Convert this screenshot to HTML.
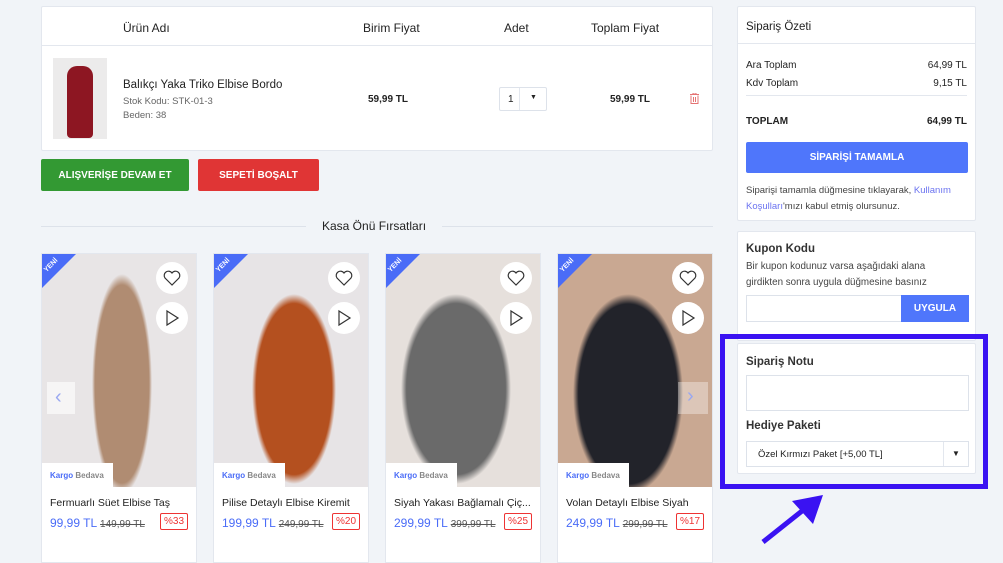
<!DOCTYPE html>
<html><head><meta charset="utf-8"><style>
*{box-sizing:border-box;margin:0;padding:0}
body{width:1003px;height:557px;overflow:hidden;background:#f1f4f8;font-family:"Liberation Sans",sans-serif;color:#222;position:relative}
.abs{position:absolute}
.box{position:absolute;background:#fff;border:1px solid #e3e7ee;border-radius:2px}
.th{position:absolute;top:14px;font-size:12px;color:#222}
.btn{position:absolute;color:#fff;font-size:10px;font-weight:bold;display:flex;align-items:center;justify-content:center;border-radius:2px}
.card{position:absolute;top:253px;width:156px;height:310px;background:#fff;border:1px solid #e3e7ee;overflow:hidden}
.img{position:absolute;left:0;top:0;width:156px;height:233px}
.yeni{position:absolute;left:0;top:0;width:0;height:0;border-top:34px solid #4a6cf7;border-right:34px solid transparent}
.yt{position:absolute;left:1px;top:8px;font-size:7px;color:#fff;font-weight:bold;transform:rotate(-45deg)}
.circ{position:absolute;width:32px;height:32px;border-radius:50%;background:#fff;display:flex;align-items:center;justify-content:center}
.kargo{position:absolute;left:0;top:209px;width:71px;height:24px;background:#fff;font-size:8px;font-weight:bold;color:#888;padding:8px 0 0 8px}
.kargo b{color:#4a6cf7}
.ct{position:absolute;left:8px;top:243px;font-size:10.5px;color:#222;white-space:nowrap}
.pr{position:absolute;left:8px;top:262px;font-size:12px;color:#4a6cf7;white-space:nowrap}
.pr s{color:#555;font-size:10px}
.dc{position:absolute;right:8px;top:259px;border:1px solid #e33;color:#e33;font-size:10px;padding:2px 3px;border-radius:2px}
.r{position:absolute;font-size:10px}
</style></head><body>

<div class="box" style="left:41px;top:6px;width:672px;height:145px">
 <div class="th" style="left:81px">Ürün Adı</div>
 <div class="th" style="left:321px">Birim Fiyat</div>
 <div class="th" style="left:462px">Adet</div>
 <div class="th" style="left:549px">Toplam Fiyat</div>
 <div class="abs" style="left:0;top:38px;width:670px;height:1px;background:#e3e7ee"></div>
 <div class="abs" style="left:11px;top:51px;width:54px;height:81px;background:#ecebeb;overflow:hidden"><div class="abs" style="left:14px;top:8px;width:26px;height:72px;background:#8d1622;border-radius:10px 10px 4px 4px"></div></div>
 <div class="abs" style="left:81px;top:72px;font-size:11.5px">Balıkçı Yaka Triko Elbise Bordo</div>
 <div class="abs" style="left:81px;top:89px;font-size:9.5px;color:#666">Stok Kodu: STK-01-3</div>
 <div class="abs" style="left:81px;top:103px;font-size:9.5px;color:#666">Beden: 38</div>
 <div class="abs" style="left:326px;top:87px;font-size:10px;font-weight:bold">59,99 TL</div>
 <div class="abs" style="left:457px;top:80px;width:48px;height:24px;border:1px solid #dde2ea;border-radius:2px;font-size:10px;padding:6px 0 0 8px">1<span class="abs" style="left:19px;top:0;width:1px;height:22px;background:#e3e7ee"></span><span class="abs" style="left:30px;top:6px;font-size:7px">▼</span></div>
 <div class="abs" style="left:568px;top:87px;font-size:10px;font-weight:bold">59,99 TL</div>
 <svg class="abs" style="left:648px;top:86px" width="9" height="11" viewBox="0 0 9 11"><path d="M0 1.5H9M3 1.5V0H6V1.5M1 2.5V10.5H8V2.5M3.5 4V9M5.5 4V9" stroke="#e57373" fill="none" stroke-width="1"/></svg>
</div>

<div class="btn" style="left:41px;top:159px;width:148px;height:32px;background:#339933">ALIŞVERİŞE DEVAM ET</div>
<div class="btn" style="left:198px;top:159px;width:121px;height:32px;background:#e03535">SEPETİ BOŞALT</div>

<div class="abs" style="left:41px;top:226px;width:265px;height:1px;background:#dde2ea"></div>
<div class="abs" style="left:322px;top:219px;font-size:12px;color:#222">Kasa Önü Fırsatları</div>
<div class="abs" style="left:442px;top:226px;width:271px;height:1px;background:#dde2ea"></div>

<div class="card" style="left:41px">
 <div class="img" style="background:radial-gradient(ellipse 30px 110px at 80px 130px,#b08c72 90%,transparent 100%),#e8e5e6"></div>
 <div class="yeni"></div><div class="yt">YENİ</div>
 <div class="abs" style="left:5px;top:128px;width:28px;height:32px;background:rgba(255,255,255,.6)"><span class="abs" style="left:8px;top:4px;font-size:20px;color:#9aa8f0">‹</span></div>
 <div class="kargo"><b>Kargo</b> Bedava</div>
 <div class="ct">Fermuarlı Süet Elbise Taş</div>
 <div class="pr">99,99 TL <s>149,99 TL</s></div><div class="dc">%33</div>
</div>
<div class="card" style="left:213px">
 <div class="img" style="background:radial-gradient(ellipse 42px 95px at 80px 135px,#b4501f 90%,transparent 100%),#e7e4e6"></div>
 <div class="yeni"></div><div class="yt">YENİ</div>
 <div class="kargo"><b>Kargo</b> Bedava</div>
 <div class="ct">Pilise Detaylı Elbise Kiremit</div>
 <div class="pr">199,99 TL <s>249,99 TL</s></div><div class="dc">%20</div>
</div>
<div class="card" style="left:385px">
 <div class="img" style="background:radial-gradient(ellipse 55px 95px at 70px 135px,#6a6a6a 90%,transparent 100%),#e6e0dc"></div>
 <div class="yeni"></div><div class="yt">YENİ</div>
 <div class="kargo"><b>Kargo</b> Bedava</div>
 <div class="ct">Siyah Yakası Bağlamalı Çiç...</div>
 <div class="pr">299,99 TL <s>399,99 TL</s></div><div class="dc">%25</div>
</div>
<div class="card" style="left:557px">
 <div class="img" style="background:radial-gradient(ellipse 55px 100px at 70px 140px,#22232a 90%,transparent 100%),#c9a892"></div>
 <div class="yeni"></div><div class="yt">YENİ</div>
 <div class="abs" style="left:120px;top:128px;width:30px;height:32px;background:rgba(255,255,255,.35)"><span class="abs" style="left:9px;top:3px;font-size:20px;color:#9aa8f0">›</span></div>
 <div class="kargo"><b>Kargo</b> Bedava</div>
 <div class="ct">Volan Detaylı Elbise Siyah</div>
 <div class="pr">249,99 TL <s>299,99 TL</s></div><div class="dc">%17</div>
</div>

<div class="box" style="left:737px;top:6px;width:239px;height:215px">
 <div class="abs" style="left:8px;top:14px;font-size:11.5px">Sipariş Özeti</div>
 <div class="abs" style="left:0;top:36px;width:237px;height:1px;background:#e3e7ee"></div>
 <div class="r" style="left:8px;top:53px">Ara Toplam</div><div class="r" style="right:8px;top:53px">64,99 TL</div>
 <div class="r" style="left:8px;top:71px">Kdv Toplam</div><div class="r" style="right:8px;top:71px">9,15 TL</div>
 <div class="abs" style="left:8px;top:88px;width:221px;height:1px;background:#e3e7ee"></div>
 <div class="r" style="left:8px;top:109px;font-weight:bold">TOPLAM</div><div class="r" style="right:8px;top:109px;font-weight:bold">64,99 TL</div>
 <div class="btn" style="left:8px;top:135px;width:222px;height:31px;background:#4f76fb">SİPARİŞİ TAMAMLA</div>
 <div class="abs" style="left:8px;top:176px;width:225px;font-size:9.5px;line-height:16px;color:#444">Siparişi tamamla düğmesine tıklayarak, <span style="color:#6b73f0">Kullanım Koşulları</span>'mızı kabul etmiş olursunuz.</div>
</div>

<div class="box" style="left:737px;top:231px;width:239px;height:110px">
 <div class="abs" style="left:8px;top:11px;font-size:11.5px;font-weight:bold;color:#333">Kupon Kodu</div>
 <div class="abs" style="left:8px;top:27px;width:200px;font-size:9.8px;line-height:16px;color:#444">Bir kupon kodunuz varsa aşağıdaki alana girdikten sonra uygula düğmesine basınız</div>
 <div class="abs" style="left:8px;top:63px;width:156px;height:27px;border:1px solid #dde2ea;border-right:none"></div>
 <div class="btn" style="left:163px;top:63px;width:68px;height:27px;background:#4f76fb;border-radius:0">UYGULA</div>
</div>

<div class="box" style="left:737px;top:343px;width:239px;height:131px">
 <div class="abs" style="left:8px;top:12px;font-size:11.5px;font-weight:bold;color:#333">Sipariş Notu</div>
 <div class="abs" style="left:8px;top:31px;width:223px;height:36px;border:1px solid #dde2ea"></div>
 <div class="abs" style="left:8px;top:76px;font-size:11.5px;font-weight:bold;color:#333">Hediye Paketi</div>
 <div class="abs" style="left:8px;top:97px;width:223px;height:26px;border:1px solid #dde2ea;font-size:9.5px;padding:7px 0 0 11px">Özel Kırmızı Paket [+5,00 TL]<span class="abs" style="left:196px;top:0;width:1px;height:24px;background:#e3e7ee"></span><span class="abs" style="left:205px;top:7px;font-size:8px">▼</span></div>
</div>

<div class="abs" style="left:720px;top:334px;width:268px;height:155px;border:5px solid #3a12f2"></div>
<svg class="abs" style="left:755px;top:490px" width="75" height="60"><path d="M8 52L52 17" stroke="#3a12f2" stroke-width="5"/><path d="M68 5L37 11L58 34Z" fill="#3a12f2"/></svg>

<div class="circ" style="left:156px;top:262px"><svg width="18" height="16" viewBox="0 0 18 16"><path d="M9 15L2 8A4 4 0 0 1 9 3A4 4 0 0 1 16 8Z" fill="none" stroke="#333" stroke-width="1.2"/></svg></div>
<div class="circ" style="left:156px;top:302px"><svg width="16" height="18" viewBox="0 0 16 18"><path d="M3 2L14 9L3 16Z" fill="none" stroke="#333" stroke-width="1.2"/></svg></div>
<div class="circ" style="left:328px;top:262px"><svg width="18" height="16" viewBox="0 0 18 16"><path d="M9 15L2 8A4 4 0 0 1 9 3A4 4 0 0 1 16 8Z" fill="none" stroke="#333" stroke-width="1.2"/></svg></div>
<div class="circ" style="left:328px;top:302px"><svg width="16" height="18" viewBox="0 0 16 18"><path d="M3 2L14 9L3 16Z" fill="none" stroke="#333" stroke-width="1.2"/></svg></div>
<div class="circ" style="left:500px;top:262px"><svg width="18" height="16" viewBox="0 0 18 16"><path d="M9 15L2 8A4 4 0 0 1 9 3A4 4 0 0 1 16 8Z" fill="none" stroke="#333" stroke-width="1.2"/></svg></div>
<div class="circ" style="left:500px;top:302px"><svg width="16" height="18" viewBox="0 0 16 18"><path d="M3 2L14 9L3 16Z" fill="none" stroke="#333" stroke-width="1.2"/></svg></div>
<div class="circ" style="left:672px;top:262px"><svg width="18" height="16" viewBox="0 0 18 16"><path d="M9 15L2 8A4 4 0 0 1 9 3A4 4 0 0 1 16 8Z" fill="none" stroke="#333" stroke-width="1.2"/></svg></div>
<div class="circ" style="left:672px;top:302px"><svg width="16" height="18" viewBox="0 0 16 18"><path d="M3 2L14 9L3 16Z" fill="none" stroke="#333" stroke-width="1.2"/></svg></div>
</body></html>
